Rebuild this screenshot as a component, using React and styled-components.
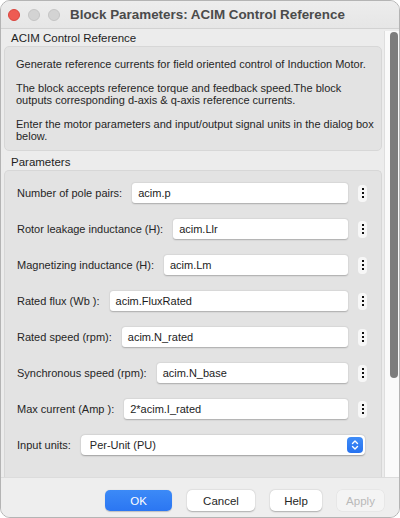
import React from "react";
import styled, { createGlobalStyle } from "styled-components";

const GlobalStyle = createGlobalStyle`
  html, body {
    margin: 0;
    padding: 0;
    background: #ffffff;
  }
  body {
    font-family: "Liberation Sans", Arial, sans-serif;
    font-size: 11px;
    color: #262626;
  }
`;

const Window = styled.div`
  width: 400px;
  height: 518px;
  box-sizing: border-box;
  display: flex;
  flex-direction: column;
  background: #ececec;
  border: 1px solid #b4b4b4;
  border-radius: 10px;
  overflow: hidden;
`;

const TitleBar = styled.div`
  height: 27px;
  flex: none;
  display: flex;
  align-items: center;
  padding-left: 7px;
  background: linear-gradient(#ededed, #e6e6e6);
  border-bottom: 1px solid #d2d2d2;
`;

const Light = styled.span`
  width: 12px;
  height: 12px;
  border-radius: 50%;
  margin-right: 8px;
  box-sizing: border-box;
  background: ${({ $color }) => $color};
  border: 0.5px solid ${({ $edge }) => $edge};
`;

const Title = styled.div`
  margin-left: 2px;
  font-size: 13.4px;
  font-weight: bold;
  color: #4b4b4b;
  white-space: nowrap;
`;

const Main = styled.div`
  flex: 1;
  display: flex;
  min-height: 0;
`;

const Content = styled.div`
  flex: 1;
  padding: 2px 0 0 3px;
  margin-right: 2px;
  display: flex;
  flex-direction: column;
`;

const GroupLabel = styled.div`
  font-size: 11.5px;
  padding-left: 7px;
  height: 15px;
  line-height: 15px;
  color: #1e1e1e;
`;

const Box = styled.div`
  background: #e3e3e3;
  border: 1px solid #d7d7d7;
  border-radius: 5px;
  box-sizing: border-box;
`;

const Description = styled(Box)`
  height: 105px;
  padding: 11px 2px 0 11px;
  margin-bottom: 4px;

  p {
    margin: 0 0 12px;
    line-height: 12px;
    font-size: 11px;
  }
`;

const Panel = styled(Box)`
  flex: 1;
  padding: 12px 14px 0 12px;
  border-bottom-left-radius: 0;
  border-bottom-right-radius: 0;
  border-bottom: none;
  display: flex;
  flex-direction: column;
  gap: 16px;
`;

const Row = styled.div`
  display: flex;
  align-items: center;
  height: 20px;
`;

const Label = styled.span`
  white-space: nowrap;
  font-size: 11px;
  margin-right: 10px;
`;

const TextField = styled.div`
  flex: 1;
  height: 20px;
  box-sizing: border-box;
  background: #ffffff;
  border-radius: 3px;
  box-shadow: 0 0.5px 1.5px rgba(0, 0, 0, 0.25);
  padding-left: 6px;
  line-height: 20px;
  font-size: 11px;
  color: #1c1c1c;
`;

const Dots = styled.div`
  width: 9px;
  height: 17px;
  margin-left: 10px;
  background: #f7f7f7;
  border-radius: 4px;
  display: flex;
  flex-direction: column;
  align-items: center;
  justify-content: center;
  gap: 2px;

  i {
    width: 2px;
    height: 2px;
    background: #111;
  }
`;

const Select = styled.div`
  flex: 1;
  height: 20px;
  margin-right: 2px;
  display: flex;
  align-items: center;
  justify-content: space-between;
  background: #ffffff;
  border-radius: 4px;
  box-shadow: 0 0.5px 1.5px rgba(0, 0, 0, 0.3);
  padding: 0 2px 0 9px;
  font-size: 11px;
`;

const Stepper = styled.span`
  width: 16px;
  height: 16px;
  border-radius: 4px;
  background: linear-gradient(#3f8cf7, #2672f0);
  display: flex;
  align-items: center;
  justify-content: center;
`;

const ScrollTrack = styled.div`
  width: 15px;
  flex: none;
  margin: 2px 0 0 0;
  box-sizing: border-box;
  background: #fafafa;
  border-left: 1px solid #dedede;
  padding: 0 1px 0 5px;
  display: flex;
  flex-direction: column;
`;

const Thumb = styled.div`
  height: 346px;
  margin-top: 1px;
  background: #7d7d7d;
  border-radius: 5px;
`;

const Footer = styled.div`
  height: 40px;
  flex: none;
  box-sizing: border-box;
  display: flex;
  align-items: flex-start;
  justify-content: flex-end;
  gap: 15px;
  padding: 12px 15px 0 0;
  background: #eeeeee;
  border-top: 1px solid #dcdcdc;
`;

const Button = styled.button`
  width: ${({ $w }) => $w}px;
  height: 21px;
  border: none;
  border-radius: 5px;
  font-family: inherit;
  font-size: 11.5px;
  padding: 0;
  color: ${({ $primary, disabled }) =>
    $primary ? "#ffffff" : disabled ? "#b9b9b9" : "#262626"};
  background: ${({ $primary, disabled }) =>
    $primary
      ? "linear-gradient(#3c8af7, #2b76f2)"
      : disabled
      ? "#f4f4f4"
      : "#ffffff"};
  box-shadow: ${({ $primary, disabled }) =>
    $primary
      ? "0 0.5px 1px rgba(0,0,0,0.2)"
      : disabled
      ? "0 0 0 0.5px rgba(0,0,0,0.06)"
      : "0 0.5px 1.5px rgba(0,0,0,0.28)"};
`;

const params = [
  ["Number of pole pairs:", "acim.p"],
  ["Rotor leakage inductance (H):", "acim.Llr"],
  ["Magnetizing inductance (H):", "acim.Lm"],
  ["Rated flux (Wb ):", "acim.FluxRated"],
  ["Rated speed (rpm):", "acim.N_rated"],
  ["Synchronous speed (rpm):", "acim.N_base"],
  ["Max current (Amp ):", "2*acim.I_rated"],
];

function StepperIcon() {
  return (
    <svg width="8" height="12" viewBox="0 0 8 12">
      <path
        d="M1.5 4.5 L4 2 L6.5 4.5 M1.5 7.5 L4 10 L6.5 7.5"
        fill="none"
        stroke="#fff"
        strokeWidth="1.4"
        strokeLinecap="round"
        strokeLinejoin="round"
      />
    </svg>
  );
}

export default function App() {
  return (
    <>
      <GlobalStyle />
      <Window>
        <TitleBar>
          <Light $color="#ee5b53" $edge="#d9453e" />
          <Light $color="#d3d3d3" $edge="#c4c4c4" />
          <Light $color="#d3d3d3" $edge="#c4c4c4" />
          <Title>Block Parameters: ACIM Control Reference</Title>
        </TitleBar>
        <Main>
          <Content>
            <GroupLabel>ACIM Control Reference</GroupLabel>
            <Description>
              <p>
                Generate reference currents for field oriented control of
                Induction Motor.
              </p>
              <p>
                The block accepts reference torque and feedback speed.The block
                <br />
                outputs corresponding d-axis &amp; q-axis reference currents.
              </p>
              <p>
                Enter the motor parameters and input/output signal units in the
                dialog box below.
              </p>
            </Description>
            <GroupLabel>Parameters</GroupLabel>
            <Panel>
              {params.map(([label, value]) => (
                <Row key={label}>
                  <Label>{label}</Label>
                  <TextField>{value}</TextField>
                  <Dots>
                    <i />
                    <i />
                    <i />
                  </Dots>
                </Row>
              ))}
              <Row>
                <Label>Input units:</Label>
                <Select>
                  <span>Per-Unit (PU)</span>
                  <Stepper>
                    <StepperIcon />
                  </Stepper>
                </Select>
              </Row>
            </Panel>
          </Content>
          <ScrollTrack>
            <Thumb />
          </ScrollTrack>
        </Main>
        <Footer>
          <Button $primary $w={67}>OK</Button>
          <Button $w={68}>Cancel</Button>
          <Button $w={52}>Help</Button>
          <Button disabled $w={47}>Apply</Button>
        </Footer>
      </Window>
    </>
  );
}
